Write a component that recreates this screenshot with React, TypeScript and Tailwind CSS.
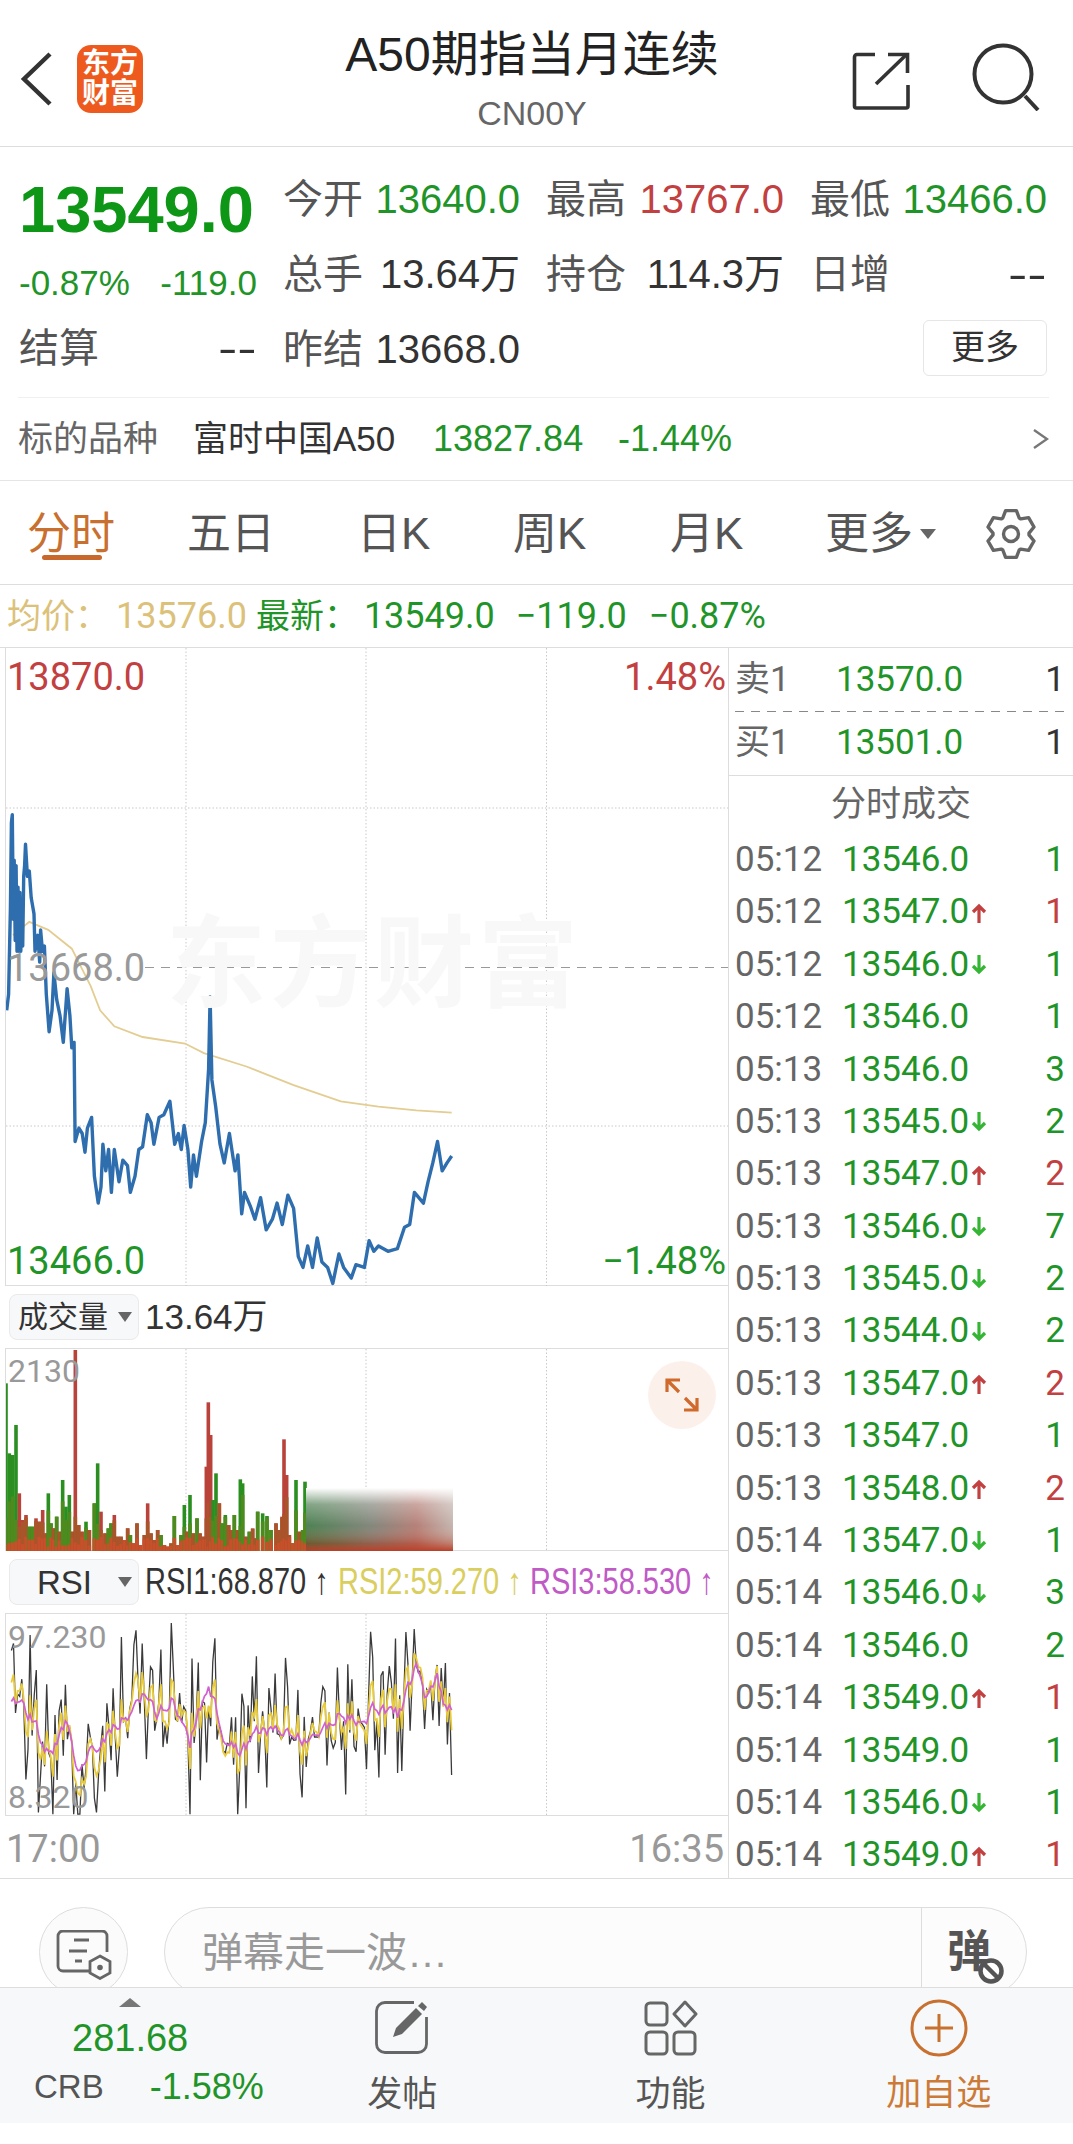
const green = 'text-[#1f9428]';
const red = 'text-[#c2403f]';

// tabs and their slot widths
const tabs = [
  { label: '分时', w: 'w-[160px]', active: true },
  { label: '五日', w: 'w-[170px]' },
  { label: '日K', w: 'w-[156px]' },
  { label: '周K', w: 'w-[157px]' },
  { label: '月K', w: 'w-[155px]' },
];

const trades: [string, string, '' | 'up' | 'down', string][] = [
  ['05:12', '13546.0', '', '1'],
  ['05:12', '13547.0', 'up', '1'],
  ['05:12', '13546.0', 'down', '1'],
  ['05:12', '13546.0', '', '1'],
  ['05:13', '13546.0', '', '3'],
  ['05:13', '13545.0', 'down', '2'],
  ['05:13', '13547.0', 'up', '2'],
  ['05:13', '13546.0', 'down', '7'],
  ['05:13', '13545.0', 'down', '2'],
  ['05:13', '13544.0', 'down', '2'],
  ['05:13', '13547.0', 'up', '2'],
  ['05:13', '13547.0', '', '1'],
  ['05:13', '13548.0', 'up', '2'],
  ['05:14', '13547.0', 'down', '1'],
  ['05:14', '13546.0', 'down', '3'],
  ['05:14', '13546.0', '', '2'],
  ['05:14', '13549.0', 'up', '1'],
  ['05:14', '13549.0', '', '1'],
  ['05:14', '13546.0', 'down', '1'],
  ['05:14', '13549.0', 'up', '1'],
];

// price line, sampled off the picture
const pricePts = [
  [12, 990], [16, 960], [20, 800], [22, 640], [24, 625], [26, 820], [28, 710], [30, 860], [32, 720], [34, 880], [36, 760], [38, 880],
  [40, 770], [42, 880], [44, 790], [46, 870], [48, 740], [50, 720], [52, 680], [56, 740], [60, 730], [64, 780], [70, 810], [72, 880],
  [78, 850], [82, 900], [84, 840], [88, 880], [92, 870], [96, 960], [102, 1030], [108, 990], [112, 920], [118, 970], [125, 1000],
  [132, 1050], [140, 950], [146, 1000], [150, 1060], [155, 1050], [157, 1235], [165, 1210], [172, 1220], [178, 1255], [183, 1210],
  [192, 1190], [198, 1300], [206, 1350], [212, 1320], [216, 1240], [222, 1290], [228, 1250], [234, 1330], [240, 1250], [250, 1310],
  [258, 1270], [268, 1280], [274, 1330], [284, 1300], [292, 1250], [300, 1245], [310, 1185], [318, 1200], [324, 1240], [335, 1190],
  [345, 1185], [358, 1160], [368, 1240], [376, 1220], [382, 1250], [388, 1205], [396, 1250], [402, 1320], [408, 1260], [414, 1300],
  [425, 1235], [433, 1200], [440, 1100], [443, 965], [447, 1120], [455, 1170], [464, 1240], [473, 1275], [484, 1220], [496, 1290],
  [502, 1260], [510, 1370], [516, 1330], [528, 1355], [538, 1380], [550, 1340], [562, 1400], [575, 1380], [585, 1350], [596, 1390],
  [608, 1335], [620, 1360], [630, 1450], [640, 1470], [650, 1430], [660, 1470], [670, 1415], [680, 1460], [692, 1470], [703, 1500],
  [716, 1445], [726, 1470], [742, 1490], [752, 1465], [770, 1470], [780, 1420], [790, 1440], [800, 1430], [820, 1440], [840, 1435],
  [855, 1395], [866, 1390], [876, 1330], [895, 1350], [905, 1310], [915, 1275], [925, 1235], [935, 1290], [945, 1275], [955, 1262],
];

const avgPts = [
  [25, 850], [60, 825], [100, 840], [150, 875], [190, 945], [210, 990], [240, 1020], [300, 1040], [390, 1052], [430, 1070],
  [520, 1095], [620, 1130], [720, 1160], [800, 1170], [880, 1177], [955, 1181],
];

const rsiTrend = [
  [20, 1100], [50, 1100], [80, 1170], [100, 1230], [140, 1140], [160, 1250], [200, 1200], [250, 1140], [290, 1110], [310, 1060],
  [330, 1130], [360, 1080], [400, 1200], [440, 1020], [470, 1180], [510, 1220], [560, 1160], [620, 1190], [680, 1180], [720, 1110],
  [760, 1140], [800, 1100], [840, 1130], [880, 990], [900, 1080], [925, 1010], [940, 1110], [955, 1095],
];

// volume bars: x and top in 3x crop pixels, g or r for the colour of the tip
const volBars: [number, number, string][] = [
  [15, 100, 'g'], [25, 310, 'g'], [35, 315, 'g'], [45, 225, 'g'], [55, 430, 'r'], [65, 510, 'r'], [75, 495, 'r'], [85, 530, 'g'],
  [95, 530, 'g'], [105, 505, 'r'], [115, 515, 'r'], [125, 480, 'r'], [133, 550, 'r'], [142, 430, 'g'], [150, 520, 'g'], [158, 535, 'r'],
  [167, 500, 'g'], [175, 545, 'r'], [185, 390, 'g'], [195, 470, 'g'], [205, 435, 'g'], [215, 545, 'r'], [223, 0, 'r'], [233, 525, 'r'],
  [243, 545, 'r'], [255, 515, 'g'], [265, 540, 'r'], [280, 460, 'g'], [290, 340, 'g'], [300, 485, 'r'], [312, 550, 'r'], [322, 535, 'g'],
  [330, 520, 'g'], [340, 495, 'r'], [350, 560, 'r'], [360, 560, 'r'], [370, 570, 'r'], [380, 535, 'r'], [388, 555, 'g'], [398, 580, 'r'],
  [408, 520, 'r'], [418, 585, 'r'], [430, 555, 'r'], [440, 460, 'r'], [450, 550, 'r'], [460, 570, 'r'], [470, 540, 'r'], [480, 555, 'g'],
  [490, 585, 'r'], [500, 590, 'r'], [510, 580, 'r'], [520, 498, 'g'], [530, 585, 'r'], [540, 555, 'g'], [550, 465, 'g'], [558, 545, 'r'],
  [567, 435, 'g'], [577, 550, 'r'], [588, 505, 'g'], [597, 550, 'r'], [607, 560, 'r'], [616, 350, 'r'], [622, 157, 'r'], [629, 255, 'r'],
  [636, 450, 'g'], [645, 370, 'g'], [655, 460, 'r'], [663, 520, 'g'], [673, 495, 'g'], [683, 525, 'r'], [690, 540, 'r'], [700, 495, 'g'],
  [710, 540, 'r'], [718, 388, 'g'], [725, 400, 'g'], [735, 560, 'r'], [745, 545, 'g'], [755, 535, 'r'], [762, 565, 'r'], [770, 485, 'g'],
  [785, 490, 'g'], [798, 498, 'g'], [810, 540, 'g'], [825, 520, 'r'], [833, 540, 'r'], [843, 500, 'r'], [849, 268, 'r'], [857, 375, 'r'],
  [865, 555, 'r'], [875, 580, 'g'], [885, 390, 'g'], [895, 545, 'r'], [905, 540, 'g'], [912, 395, 'g'],
];

function rng(seed: number) {
  let a = seed;
  return () => {
    a = (a + 0x6d2b79f5) | 0;
    let t = Math.imul(a ^ (a >>> 15), 1 | a);
    t = (t + Math.imul(t ^ (t >>> 7), 61 | t)) ^ t;
    return ((t ^ (t >>> 14)) >>> 0) / 4294967296;
  };
}

const mainLine = (pts: number[][]) => pts.map(([x, y]) => `${(x / 2.119).toFixed(1)},${(480 + y / 1.867).toFixed(1)}`).join(' ');

function interp(pts: number[][], x: number) {
  for (let i = 1; i < pts.length; i++) {
    if (x <= pts[i][0]) {
      const [x0, y0] = pts[i - 1];
      const [x1, y1] = pts[i];
      return y0 + ((x - x0) / (x1 - x0)) * (y1 - y0);
    }
  }
  return pts[pts.length - 1][1];
}

function buildRsi() {
  const r = rng(23);
  const black: string[] = [];
  const yellow: string[] = [];
  const pink: string[] = [];
  let smooth = 0;
  for (let zx = 22; zx <= 955; zx += 4.4) {
    const n = (r() - 0.5) * 2;
    smooth = smooth * 0.6 + n * 0.4;
    const t = interp(rsiTrend, zx);
    const px = (zx / 2.119).toFixed(1);
    const py = (v: number) => (1300 + Math.min(1390, Math.max(860, v)) / 2.703).toFixed(1);
    black.push(`${px},${py(t + n * Math.abs(n) * 230)}`);
    yellow.push(`${px},${py(t + n * 45 + smooth * 90)}`);
    pink.push(`${px},${py(t + smooth * 45)}`);
  }
  return { black, yellow, pink };
}

const rsi = buildRsi();

// six-tooth gear outline around 26,26
function gearPath() {
  const pts: string[] = [];
  for (let k = 0; k < 6; k++) {
    const a = (k * 60 - 90) * (Math.PI / 180);
    for (const [rad, off] of [[18, -27], [24, -13], [24, 13], [18, 27]] as const) {
      const b = a + (off * Math.PI) / 180;
      pts.push(`${(26 + rad * Math.cos(b)).toFixed(1)} ${(26 + rad * Math.sin(b)).toFixed(1)}`);
    }
  }
  return `M${pts.join('L')}Z`;
}

function VolumeBars() {
  const r = rng(5);
  return (
    <>
      {volBars.map(([zx, top, c]) => {
        const mid = Math.max(top, 430 + r() * 110);
        const low = Math.max(top, 560 + r() * 30);
        const y = (v: number) => 1350 + v / 3;
        return (
          <g key={zx}>
            <rect x={zx / 3 - 1.8} y={y(top)} width={3.6} height={1551 - y(top)} fill={c === 'g' ? '#2a8f20' : '#b9423a'} />
            <rect x={zx / 3 - 1.8} y={y(mid)} width={3.6} height={1551 - y(mid)} fill={c === 'g' ? '#4f8a1f' : '#a9552a'} />
            <rect x={zx / 3 - 1.8} y={y(low)} width={3.6} height={1551 - y(low)} fill="#c5502a" />
          </g>
        );
      })}
    </>
  );
}

function GridLines({ top, bottom }: { top: number; bottom: number }) {
  return (
    <>
      {[185, 365, 545.5].map((x) => (
        <line key={x} x1={x} x2={x} y1={top} y2={bottom} stroke="#c9c9c9" strokeDasharray="1.5 2" />
      ))}
    </>
  );
}

function Selector({ label, wide }: { label: string; wide?: boolean }) {
  return (
    <div className="flex items-center w-[130px] h-[46px] bg-[#f7f8f9] border border-[#eaeaea] rounded-lg">
      <span className={`${wide ? 'pl-[27px] w-[108px] text-[33px]' : 'pl-[8px] w-[108px] text-[30px]'} text-[#333] leading-none whitespace-nowrap`}>{label}</span>
      <svg width="14" height="12" viewBox="0 0 14 12" className="shrink-0">
        <path d="M0 1h14L7 11z" fill="#666" />
      </svg>
    </div>
  );
}

function TickArrow({ up }: { up: boolean }) {
  return (
    <svg width="16" height="20" viewBox="0 0 16 20" fill="none" stroke={up ? '#c2403f' : '#34b534'} strokeWidth="3.2" className="ml-[2px]">
      {up ? <path d="M8 20V3M2 9l6-6 6 6" /> : <path d="M8 0v17M2 11l6 6 6-6" />}
    </svg>
  );
}

export default function App() {
  return (
    <div className="w-[1073px] h-[2144px] overflow-hidden bg-white text-[#333] flex flex-col [font-family:'Liberation_Sans','Noto_Sans_CJK_SC',sans-serif]">
      {/* Header */}
      <div className="h-[147px] shrink-0 flex border-b border-[#ddd]">
        <div className="w-[264px] flex items-center pl-[20px] pt-[12px]">
          <svg width="32" height="54" viewBox="0 0 32 54" fill="none" stroke="#333" strokeWidth="4.5">
            <path d="M30 2 4 27l26 25" />
          </svg>
          <div className="ml-[25px] w-[66px] h-[68px] rounded-[14px] bg-[#ee5a1e] text-white text-[28px] font-bold leading-[30px] text-center flex flex-col justify-center">
            <span>东方</span>
            <span>财富</span>
          </div>
        </div>
        <div className="w-[536px] flex flex-col items-center pt-[29px]">
          <div className="text-[48px] leading-[52px] text-[#222] whitespace-nowrap">A50期指当月连续</div>
          <div className="mt-[12px] text-[34px] leading-[40px] text-[#666]">CN00Y</div>
        </div>
        <div className="flex-1 flex items-center justify-end pr-[33px] pt-[8px] gap-[62px]">
          <svg width="58" height="58" viewBox="0 0 58 58" fill="none" stroke="#333" strokeWidth="3.6" className="mt-[8px]">
            <path d="M23 2.500H5A2.500 2.500 0 0 0 2.500 5v49A2 2 0 0 0 4.500 56H54a2 2 0 0 0 2-2V33" />
            <path d="M36 2.500h19.500V21" />
            <path d="M24 32 54 3" />
          </svg>
          <svg width="68" height="68" viewBox="0 0 68 68" fill="none" stroke="#333" strokeWidth="4">
            <circle cx="31" cy="31" r="28.500" />
            <path d="m53 53 13 14" />
          </svg>
        </div>
      </div>

      {/* Quote */}
      <div className="h-[334px] shrink-0 border-b border-[#e5e5e5] flex flex-col">
        <div className="h-[250px] pl-[19px] pt-[14px] flex">
          <div className="w-[238px] mr-[26px] shrink-0 flex flex-col">
            <div className="h-[96px] flex items-center text-[65px] font-bold text-[#0e9616] leading-none">13549.0</div>
            <div className={`h-[52px] flex items-center justify-between text-[35px] ${green}`}>
              <span>-0.87%</span>
              <span>-119.0</span>
            </div>
            <div className="mt-[2px] h-[74px] flex items-center justify-between text-[40px] text-[#555]">
              <span>结算</span>
              <span className="text-[#333] scale-x-[1.45] origin-right">--</span>
            </div>
          </div>
          <div className="grid grid-cols-[237px_238px_237px] auto-rows-[75px] gap-x-[26px] text-[40px] text-[#555]">
            <div className="flex items-center justify-between"><span>今开</span><span className={green}>13640.0</span></div>
            <div className="flex items-center justify-between"><span>最高</span><span className={red}>13767.0</span></div>
            <div className="flex items-center justify-between"><span>最低</span><span className={green}>13466.0</span></div>
            <div className="flex items-center justify-between"><span>总手</span><span className="text-[#333]">13.64万</span></div>
            <div className="flex items-center justify-between"><span>持仓</span><span className="text-[#333]">114.3万</span></div>
            <div className="flex items-center justify-between"><span>日增</span><span className="text-[#333] scale-x-[1.45] origin-right">--</span></div>
            <div className="flex items-center justify-between"><span>昨结</span><span className="text-[#333]">13668.0</span></div>
            <div />
            <div className="flex items-center justify-end pb-[2px]">
              <div className="w-[124px] h-[56px] border border-[#e6e6e6] rounded-md flex items-center justify-center text-[34px] text-[#333]">更多</div>
            </div>
          </div>
        </div>
        <div className="mx-[18px] mr-[24px] flex-1 border-t border-[#f0f0f0] flex items-center text-[35px] whitespace-nowrap">
          <span className="text-[#666] w-[175px]">标的品种</span>
          <span className="text-[#333] text-[35px] w-[240px]">富时中国A50</span>
          <span className={`${green} text-[36px] w-[185px]`}>13827.84</span>
          <span className={`${green} text-[36px]`}>-1.44%</span>
          <svg width="18" height="24" viewBox="0 0 18 24" fill="none" stroke="#777" strokeWidth="2.4" className="ml-auto">
            <path d="m3 3 13 9-13 9" />
          </svg>
        </div>
      </div>

      {/* Tabs */}
      <div className="h-[104px] shrink-0 border-b border-[#ddd] pl-[27px] pt-[3px] flex items-center text-[44px] text-[#555] whitespace-nowrap">
        {tabs.map((t) => (
          <div key={t.label} className={`${t.w} relative`}>
            <span className={t.active ? 'text-[#c8702f]' : ''}>{t.label}</span>
            {t.active && <div className="absolute left-[15px] top-[54px] w-[60px] h-[5px] rounded-full bg-[#c8682c]" />}
          </div>
        ))}
        <div className="w-[159px] flex items-center text-[#555]">
          <span>更多</span>
          <svg width="16" height="12" viewBox="0 0 16 12" className="ml-[7px]">
            <path d="M0 1h16L8 11z" fill="#666" />
          </svg>
        </div>
        <svg width="52" height="52" viewBox="0 0 52 52" fill="none" stroke="#666" strokeWidth="3.400" strokeLinejoin="round" className="ml-[1px]">
          <path d={gearPath()} />
          <circle cx="26" cy="26" r="7.500" />
        </svg>
      </div>

      {/* Last tick line */}
      <div className="h-[63px] shrink-0 border-b border-[#ddd] pl-[7px] flex items-center whitespace-nowrap [font-family:Roboto,'Noto_Sans_CJK_SC',sans-serif] text-[36px]">
        <span className="text-[#dcc17a] text-[34px] w-[109px]">均价：</span>
        <span className="text-[#dcc17a]">13576.0</span>
        <span className="text-[#1f9428] text-[34px] ml-[9px] w-[108px]">最新：</span>
        <span className="text-[#1f9428]">13549.0</span>
        <span className="text-[#1f9428] ml-[21px]">−119.0</span>
        <span className="text-[#1f9428] ml-[22px]">−0.87%</span>
      </div>

      {/* Body */}
      <div className="h-[1231px] shrink-0 flex overflow-hidden border-b border-[#ddd]">
        <div className="w-[728px] shrink-0 pl-[5px] flex flex-col [font-family:Roboto,'Noto_Sans_CJK_SC',sans-serif]">
          {/* Price chart */}
          <div className="relative h-[638px] border-l border-b border-[#ddd]">
            <svg width="722" height="638" viewBox="5 648 722 638" fill="none" className="block">
              <GridLines top={648} bottom={1286} />
              <line x1="5" x2="727" y1="808" y2="808" stroke="#c9c9c9" strokeDasharray="1.5 2" />
              <line x1="5" x2="727" y1="1126" y2="1126" stroke="#c9c9c9" strokeDasharray="1.5 2" />
              <line x1="144" x2="727" y1="967.5" y2="967.5" stroke="#999" strokeDasharray="9 7" />
              <polyline points={mainLine(avgPts)} stroke="#e3cd92" strokeWidth="1.8" />
              <polyline points={mainLine(pricePts)} stroke="#2f6eae" strokeWidth="3.4" strokeLinejoin="round" />
            </svg>
            <div className="absolute left-[160px] top-[262px] text-[100px] leading-[110px] font-bold text-[#f8f8f8] tracking-[4px] whitespace-nowrap">东方财富</div>
            <span className={`absolute left-[1px] top-[7px] text-[38px] leading-[44px] ${red}`}>13870.0</span>
            <span className={`absolute right-[2px] top-[7px] text-[38px] leading-[44px] ${red}`}>1.48%</span>
            <span className="absolute left-[1px] top-[298px] text-[38px] leading-[44px] text-[#999]">13668.0</span>
            <span className={`absolute left-[1px] top-[591px] text-[38px] leading-[44px] ${green}`}>13466.0</span>
            <span className={`absolute right-[2px] top-[591px] text-[38px] leading-[44px] ${green}`}>−1.48%</span>
          </div>

          {/* Volume header */}
          <div className="h-[63px] flex items-center pl-[4px] border-b border-[#ddd] [font-family:'Liberation_Sans','Noto_Sans_CJK_SC',sans-serif]">
            <Selector label="成交量" />
            <span className="ml-[6px] text-[35px] text-[#333]">13.64万</span>
          </div>

          {/* Volume chart */}
          <div className="relative h-[202px] border-l border-b border-[#ddd]">
            <svg width="722" height="202" viewBox="5 1349 722 202" className="block">
              <defs>
                <linearGradient id="blockH" x1="0" x2="1" y1="0" y2="0">
                  <stop offset="0" stopColor="#2f6b35" />
                  <stop offset="0.45" stopColor="#6f7266" />
                  <stop offset="0.75" stopColor="#a86a60" />
                  <stop offset="1" stopColor="#b9a8a0" />
                </linearGradient>
                <linearGradient id="blockFade" x1="0" x2="0" y1="0" y2="1">
                  <stop offset="0" stopColor="#fff" stopOpacity="1" />
                  <stop offset="0.26" stopColor="#fff" stopOpacity="0.4" />
                  <stop offset="0.6" stopColor="#fff" stopOpacity="0.15" />
                  <stop offset="0.88" stopColor="#c9452a" stopOpacity="0.4" />
                  <stop offset="1" stopColor="#b8402a" stopOpacity="1" />
                </linearGradient>
              </defs>
              <GridLines top={1349} bottom={1551} />
              <VolumeBars />
              <rect x="305" y="1488" width="147" height="63" fill="url(#blockH)" />
              <rect x="305" y="1488" width="147" height="63" fill="url(#blockFade)" />
            </svg>
            <span className="absolute left-[2px] top-[4px] text-[32px] leading-[36px] text-[#999]">2130</span>
            <div className="absolute left-[642px] top-[12px] w-[68px] h-[68px] rounded-full bg-[#fcf1ea] flex items-center justify-center">
              <svg width="36" height="34" viewBox="0 0 36 34" fill="none" stroke="#cf6a2c" strokeWidth="3.200">
                <path d="M3 14V2h13M3 2l12 12M33 20v12H20M33 32 21 20" />
              </svg>
            </div>
          </div>

          {/* RSI header */}
          <div className="h-[63px] flex items-center pl-[4px] border-b border-[#ddd] text-[29px] whitespace-nowrap [font-family:'Liberation_Sans','Noto_Sans_CJK_SC',sans-serif]">
            <Selector label="RSI" wide />
            <span className="ml-[6px] text-[#333] w-[193px] scale-y-[1.28] origin-left">RSI1:68.870 ↑</span>
            <span className="text-[#d9ce5e] w-[192px] scale-y-[1.28] origin-left">RSI2:59.270 ↑</span>
            <span className="text-[#bf5ac6] scale-y-[1.28] origin-left">RSI3:58.530 ↑</span>
          </div>

          {/* RSI chart */}
          <div className="relative h-[202px] border-l border-b border-[#ddd]">
            <svg width="722" height="202" viewBox="5 1614 722 202" fill="none" className="block">
              <GridLines top={1614} bottom={1816} />
              <polyline points={rsi.black.join(' ')} stroke="#3a3a3a" strokeWidth="1.3" />
              <polyline points={rsi.yellow.join(' ')} stroke="#e8cb3c" strokeWidth="1.8" />
              <polyline points={rsi.pink.join(' ')} stroke="#d160d2" strokeWidth="1.7" />
            </svg>
            <span className="absolute left-[2px] top-[5px] text-[32px] leading-[36px] text-[#999]">97.230</span>
            <span className="absolute left-[2px] top-[165px] text-[32px] leading-[36px] text-[#999]">8.320</span>
          </div>

          {/* Axis */}
          <div className="flex-1 flex items-center justify-between pl-[1px] pr-[4px] pt-[4px] text-[38px] text-[#999]">
            <span>17:00</span>
            <span>16:35</span>
          </div>
        </div>

        {/* Order book and ticks */}
        <div className="flex-1 border-l border-[#ddd] pt-[2px] [font-family:Roboto,'Noto_Sans_CJK_SC',sans-serif] text-[35px] whitespace-nowrap">
          <div className="pl-[6px] pr-[8px] h-[61px] flex items-center">
            <span className="w-[101px] text-[#666]">卖1</span>
            <span className={green}>13570.0</span>
            <span className="ml-auto text-[#333]">1</span>
          </div>
          <div className="ml-[6px] mr-[4px] h-[1px] bg-[repeating-linear-gradient(90deg,#888_0_9px,transparent_9px_16px)]" />
          <div className="h-[64px] pl-[6px] pr-[8px] flex items-center border-b border-[#ddd]">
            <span className="w-[101px] text-[#666]">买1</span>
            <span className={green}>13501.0</span>
            <span className="ml-auto text-[#333]">1</span>
          </div>
          <div className="h-[58px] flex items-center justify-center text-[#666]">分时成交</div>
          {trades.map(([time, price, dir, qty], i) => (
            <div key={i} className="h-[52.4px] pl-[6px] pr-[8px] flex items-center">
              <span className="w-[107px] text-[#666]">{time}</span>
              <span className={green}>{price}</span>
              {dir !== '' && <TickArrow up={dir === 'up'} />}
              <span className={`ml-auto ${dir === 'up' ? red : green}`}>{qty}</span>
            </div>
          ))}
        </div>
      </div>

      {/* Comment input */}
      <div className="h-[108px] shrink-0 overflow-hidden pl-[39px] pt-[28px] flex items-start">
        <div className="w-[89px] h-[90px] shrink-0 rounded-full border border-[#ddd] bg-[#fbfbfb] flex items-center justify-center pt-[6px]">
          <svg width="56" height="50" viewBox="0 0 56 50" fill="none" stroke="#666" strokeWidth="2.800">
            <path d="M33 41H7a5 5 0 0 1-5-5V6a5 5 0 0 1 5-5h39a5 5 0 0 1 5 5v16" />
            <path d="M18 10h15M13 21h18M19 31h7" />
            <path d="M44 26l10 5.500v11.500l-10 5.500-10-5.500V31.500z" />
            <circle cx="44" cy="37.500" r="2.800" fill="#666" stroke="none" />
          </svg>
        </div>
        <div className="ml-[36px] w-[863px] h-[90px] shrink-0 rounded-full border border-[#ddd] bg-[#fcfcfc] flex items-center">
          <span className="pl-[37px] pt-[3px] w-[756px] text-[41px] text-[#999]">弹幕走一波…</span>
          <div className="relative flex-1 h-full border-l border-[#ddd] flex items-center pl-[25px] text-[44px] font-bold text-[#555]">
            <span>弹</span>
            <svg width="28" height="28" viewBox="0 0 28 28" fill="#fff" stroke="#555" strokeWidth="4.500" className="absolute left-[55px] top-[49px]">
              <circle cx="14" cy="14" r="10.500" />
              <path d="m7 7 14 14" />
            </svg>
          </div>
        </div>
      </div>

      {/* Bottom bar */}
      <div className="h-[136px] shrink-0 border-t border-[#ddd] bg-[#f7f8f9] grid grid-cols-4">
        <div className="flex flex-col items-center pt-[10px] pr-[8px]">
          <svg width="22" height="9" viewBox="0 0 22 9">
            <path d="M11 0 22 9H0z" fill="#777" />
          </svg>
          <div className={`mt-[7px] h-[48px] flex items-center text-[38px] ${green}`}>281.68</div>
          <div className="h-[50px] self-start ml-[34px] flex items-center gap-[46px]">
            <span className="text-[33px] text-[#555]">CRB</span>
            <span className={`text-[36px] ${green}`}>-1.58%</span>
          </div>
        </div>
        <div className="flex flex-col items-center pt-[12px]">
          <svg width="56" height="56" viewBox="0 0 56 56" fill="none" stroke="#666" strokeWidth="2.800">
            <path d="M40 2.500H11A8.500 8.500 0 0 0 2.500 11v33a8.500 8.500 0 0 0 8.500 8.500h33a8.500 8.500 0 0 0 8.500-8.500V17" />
            <path d="M19 37 22 28 42 8 48 14 28 34z" fill="#666" stroke="none" />
            <path d="M44 6 48 2 53 7 50 11z" fill="#666" stroke="none" />
          </svg>
          <span className="mt-[13px] h-[50px] flex items-center text-[35px] text-[#555]">发帖</span>
        </div>
        <div className="flex flex-col items-center pt-[12px]">
          <svg width="54" height="56" viewBox="0 0 54 56" fill="none" stroke="#666" strokeWidth="3" strokeLinejoin="round">
            <rect x="2" y="3" width="21" height="22" rx="4" />
            <rect x="2" y="32" width="21" height="22" rx="4" />
            <rect x="30" y="32" width="21" height="22" rx="4" />
            <path d="m41 2 11 12-11 12-11-12z" />
          </svg>
          <span className="mt-[13px] h-[50px] flex items-center text-[35px] text-[#555]">功能</span>
        </div>
        <div className="flex flex-col items-center pt-[11px]">
          <svg width="58" height="58" viewBox="0 0 58 58" fill="none" stroke="#c8702f" strokeWidth="3">
            <circle cx="29" cy="29" r="27" />
            <path d="M15 29h28M29 15v28" />
          </svg>
          <span className="mt-[11px] h-[50px] flex items-center text-[35px] text-[#cc7a38]">加自选</span>
        </div>
      </div>
      <div className="flex-1 bg-white" />
    </div>
  );
}
